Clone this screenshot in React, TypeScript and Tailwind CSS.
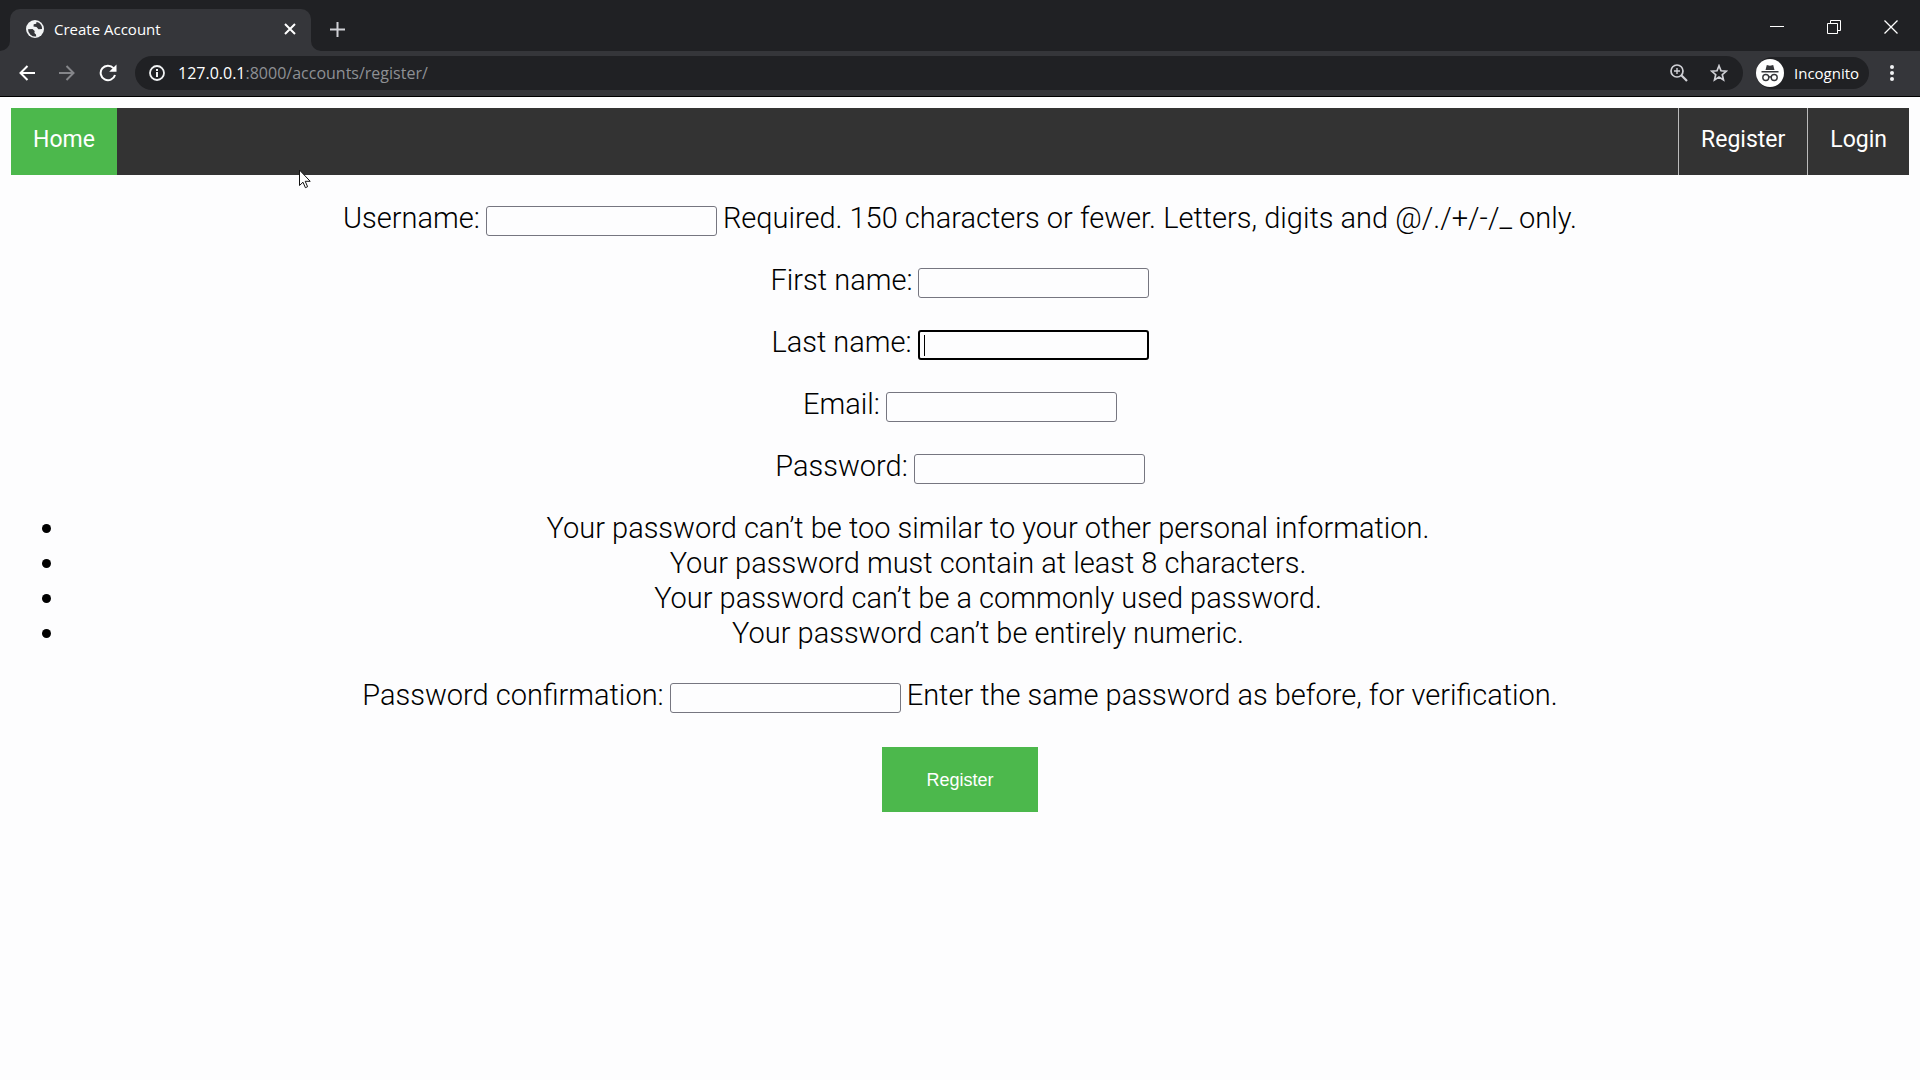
import type { ReactNode } from "react";

const inputBase = "h-[30px] w-[231px] rounded-[3px] bg-[#fdfdfe] px-1 text-lg outline-none";

function Row({ id, label, type = "text", help, focused = false }: { id: string; label: string; type?: string; help?: string; focused?: boolean }) {
  return (
    <div className="flex items-end justify-center gap-[6px]">
      <label htmlFor={id}>{label}</label>
      <span className="relative flex">
        <input
          id={id}
          name={id}
          type={type}
          aria-describedby={help ? id + "-help" : undefined}
          className={focused ? `${inputBase} border-2 border-black` : `${inputBase} border border-[#767680]`}
        />
        {focused && <span className="absolute top-[5px] left-[6px] h-[21px] w-px bg-black" />}
      </span>
      {help && <span id={id + "-help"}>{help}</span>}
    </div>
  );
}

function IconButton({ label, className, children }: { label: string; className?: string; children: ReactNode }) {
  return (
    <button type="button" aria-label={label} className={`flex items-center justify-center ${className ?? ""}`}>
      {children}
    </button>
  );
}

function TitleBar() {
  return (
    <header className="flex h-[51px] items-end bg-[#202124] text-white">
      <svg className="size-[10px]" viewBox="0 0 10 10" aria-hidden="true"><path d="M10 0v10H0A10 10 0 0 0 10 0Z" fill="#35363a" /></svg>
      <div className="flex h-[42px] w-[301px] items-center rounded-t-[10px] bg-[#35363a] pr-[13px] pb-[2px] pl-4 font-['Open_Sans',sans-serif]">
        <svg className="size-[18px]" viewBox="0 0 18 18" aria-hidden="true">
          <circle cx="9" cy="9" r="9" fill="#f1f3f4" />
          <path d="M2 9.2 6.5 9l2.2 2-.3 2 1.6 1.5.2 2A7.3 7.3 0 0 1 2 9.2ZM10.5 2l-.3 1.8-2.5.4-.2 2.3 3 .5 2 2.2 3.5-.2c.4-3.5-2-6.400-5.500-7Z" fill="#35363a" />
        </svg>
        <span className="ml-[10px] flex-1 text-[15px]">Create Account</span>
        <IconButton label="Close tab" className="size-4">
          <svg className="size-4" viewBox="0 0 16 16" aria-hidden="true"><path d="m3 3 10 10M13 3 3 13" stroke="#fff" strokeWidth="2" /></svg>
        </IconButton>
      </div>
      <svg className="size-[10px]" viewBox="0 0 10 10" aria-hidden="true"><path d="M0 0v10h10A10 10 0 0 1 0 0Z" fill="#35363a" /></svg>
      <IconButton label="New tab" className="mb-[13px] ml-2 size-[17px]">
        <svg className="size-[17px]" viewBox="0 0 17 17" aria-hidden="true"><path d="M8.500 1v15M1 8.500h15" stroke="#d0d1d6" strokeWidth="2" /></svg>
      </IconButton>
      <div className="flex-1" />
      <div className="mb-[17px] flex items-center gap-[43px] pr-[22px]">
        <IconButton label="Minimize">
          <svg className="size-[14px]" viewBox="0 0 14 14" aria-hidden="true"><path d="M0 6.500h14" stroke="#fff" /></svg>
        </IconButton>
        <IconButton label="Restore">
          <svg className="size-[14px]" viewBox="0 0 14 14" aria-hidden="true" fill="none" stroke="#fff"><path d="M.5 3.500h10v10H.5zM3.500 3.500v-3h10v10h-3" /></svg>
        </IconButton>
        <IconButton label="Close">
          <svg className="size-[14px]" viewBox="0 0 14 14" aria-hidden="true"><path d="m.5.5 13 13m0-13-13 13" stroke="#fff" strokeWidth="1.300" /></svg>
        </IconButton>
      </div>
    </header>
  );
}

function Toolbar() {
  return (
    <div className="flex h-[46px] items-center border-b border-black bg-[#35363a] pr-[26px] pb-px font-['Open_Sans',sans-serif] text-white">
      <div className="flex gap-6 pl-[19px]">
        <IconButton label="Back">
          <svg className="size-4" viewBox="0 0 16 16" fill="none" stroke="#fff" strokeWidth="2" aria-hidden="true"><path d="M16 8H1.500M8.500 1 1.500 8l7 7" /></svg>
        </IconButton>
        <IconButton label="Forward">
          <svg className="size-4" viewBox="0 0 16 16" fill="none" stroke="#85868a" strokeWidth="2" aria-hidden="true"><path d="M0 8h14.500M7.500 1l7 7-7 7" /></svg>
        </IconButton>
        <IconButton label="Reload">
          <svg className="size-[18px]" viewBox="0 0 18 18" aria-hidden="true"><path d="M14.500 4.200A7.300 7.300 0 1 0 16 11" fill="none" stroke="#fff" strokeWidth="2" /><path d="M17.500.5v7.300h-7.300z" fill="#fff" /></svg>
        </IconButton>
      </div>
      <div className="ml-[18px] flex h-[34px] flex-1 items-center rounded-full bg-[#202124] pr-[15px] pl-[14px]">
        <svg className="size-4" viewBox="0 0 16 16" aria-hidden="true"><circle cx="8" cy="8" r="7" fill="none" stroke="#f1f3f4" strokeWidth="1.800" /><path d="M8 7v5M8 4v2" stroke="#f1f3f4" strokeWidth="2" /></svg>
        <a href="#" className="ml-[13px] flex-1 text-base text-[#8e9094]"><span className="text-white">127.0.0.1</span>:8000/accounts/register/</a>
        <IconButton label="Zoom">
          <svg className="size-[18px]" viewBox="0 0 18 18" fill="none" stroke="#d0d1d6" strokeWidth="1.700" aria-hidden="true"><circle cx="7" cy="7" r="6" /><path d="m11.300 11.300 5.700 5.700" strokeWidth="2.200" /><path d="M4 7h6M7 4v6" strokeWidth="1.400" /></svg>
        </IconButton>
        <IconButton label="Bookmark this page" className="ml-[22px]">
          <svg className="size-[18px]" viewBox="0 0 18 18" fill="none" stroke="#d0d1d6" strokeWidth="1.700" aria-hidden="true"><path d="m9 1.800 2 5 5.300.4-4 3.500 1.200 5.200L9 13.100l-4.500 2.800 1.200-5.200-4-3.500L7 6.800z" /></svg>
        </IconButton>
      </div>
      <div className="ml-[13px] flex h-8 w-[113px] items-center gap-[10px] rounded-full bg-[#202124]">
        <svg className="size-7 shrink-0" viewBox="0 0 28 28" aria-hidden="true">
          <circle cx="14" cy="14" r="14" fill="#fff" />
          <path d="m9.500 11 1.300-5 3.200.8 3.200-.8 1.300 5zM5.500 12h17v1.500h-17z" fill="#35363a" />
          <g fill="none" stroke="#35363a" strokeWidth="1.400"><circle cx="9.800" cy="18.500" r="3" /><circle cx="18.200" cy="18.500" r="3" /><path d="M12.800 18.200q1.200-.8 2.400 0" /></g>
        </svg>
        <span className="text-[15px]">Incognito</span>
      </div>
      <IconButton label="Menu" className="ml-[21px]">
        <svg className="h-4 w-1" viewBox="0 0 4 16" fill="#f1f3f4" aria-hidden="true"><circle cx="2" cy="2" r="2" /><circle cx="2" cy="8" r="2" /><circle cx="2" cy="14" r="2" /></svg>
      </IconButton>
    </div>
  );
}

const rules = [
  "Your password can’t be too similar to your other personal information.",
  "Your password must contain at least 8 characters.",
  "Your password can’t be a commonly used password.",
  "Your password can’t be entirely numeric.",
];

export default function App() {
  return (
    <div className="relative min-h-screen bg-[#fdfdfe]">
      <TitleBar />
      <Toolbar />
      <main className="px-[11px] pt-[11px] font-[Roboto,sans-serif] text-[29px] leading-[35px] font-light text-black">
        <nav className="flex h-[67px] bg-[#333] text-[23px] leading-[64px] font-normal text-white">
          <a href="#" className="bg-[#4cb84c] px-[22px]">Home</a>
          <div className="flex-1" />
          <a href="#" className="border-l border-[#bbb] px-[22px]">Register</a>
          <a href="#" className="border-l border-[#bbb] px-[22px]">Login</a>
        </nav>
        <form className="mt-[26px] flex flex-col gap-[27px]">
          <Row id="username" label="Username:" help="Required. 150 characters or fewer. Letters, digits and @/./+/-/_ only." />
          <Row id="first_name" label="First name:" />
          <Row id="last_name" label="Last name:" focused />
          <Row id="email" label="Email:" type="email" />
          <Row id="password1" label="Password:" type="password" />
          <ul className="list-disc pl-[56px] text-center">
            {rules.map((rule) => <li key={rule}>{rule}</li>)}
          </ul>
          <Row id="password2" label="Password confirmation:" type="password" help="Enter the same password as before, for verification." />
          <button type="button" className="mt-[7px] h-[65px] w-[156px] self-center bg-[#4cb84c] font-['Liberation_Sans',sans-serif] text-lg font-normal text-white">Register</button>
        </form>
      </main>
      <svg className="pointer-events-none absolute top-[169px] left-[299px] h-5 w-3" viewBox="0 0 12 20" aria-hidden="true">
        <path d="M.5 1v15.500l3.500-3.300 2.400 5.500 2.200-1-2.400-5.400h5z" fill="#fff" stroke="#111" />
      </svg>
    </div>
  );
}
